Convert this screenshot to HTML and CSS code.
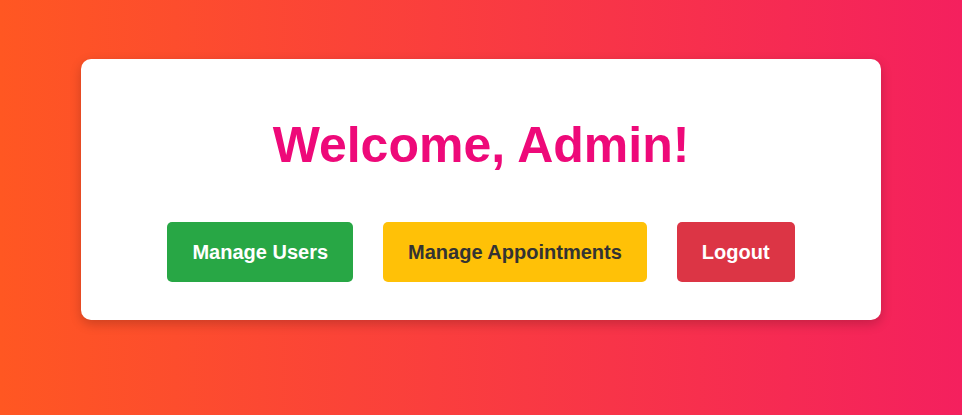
FILE: index.html
```html
<!DOCTYPE html>
<html lang="en">
<head>
<meta charset="utf-8">
<title>Admin Dashboard</title>
<link rel="stylesheet" href="styles.css">
</head>
<body>
<div class="card">
  <h1 class="title">Welcome, Admin!</h1>
  <div class="actions">
    <a class="btn btn-green" href="#">Manage Users</a>
    <a class="btn btn-yellow" href="#">Manage Appointments</a>
    <a class="btn btn-red" href="#">Logout</a>
  </div>
</div>
</body>
</html>
```
FILE: styles.css
```css
html, body {
  margin: 0;
  padding: 0;
}
body {
  width: 962px;
  height: 415px;
  background: linear-gradient(to right, #ff5722, #f4205e);
  font-family: "Liberation Sans", Arial, sans-serif;
  padding-top: 59px;
  box-sizing: border-box;
  overflow: hidden;
}
.card {
  width: 800px;
  height: 261px;
  margin: 0 auto;
  background: #fff;
  border-radius: 10px;
  box-shadow: 0 4px 12px rgba(0, 0, 0, 0.2);
  box-sizing: border-box;
  padding-top: 59px;
  text-align: center;
}
.title {
  margin: 0;
  font-size: 50px;
  font-weight: bold;
  color: #ee0979;
  line-height: 55px;
}
.actions {
  display: flex;
  justify-content: center;
  gap: 30px;
  margin-top: 49px;
}
.btn {
  display: block;
  padding: 18px 25px;
  font-size: 20px;
  font-weight: bold;
  line-height: 24px;
  text-decoration: none;
  border-radius: 5px;
  color: #fff;
}
.btn-green { background: #28a745; }
.btn-yellow { background: #ffc107; color: #333; }
.btn-red { background: #dc3545; }
```
